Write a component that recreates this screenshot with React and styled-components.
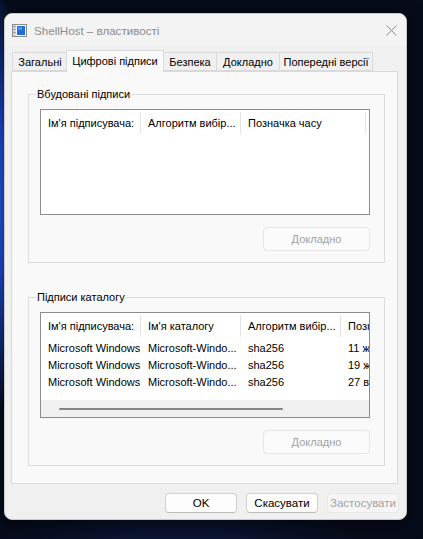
import React from "react";
import styled, { createGlobalStyle } from "styled-components";

const GlobalStyle = createGlobalStyle`
  html, body {
    margin: 0;
    height: 100%;
  }
  body {
    font-family: "Liberation Sans", Arial, sans-serif;
    background:
      radial-gradient(ellipse 40px 220px at -10px 200px, #2f6cf0 0%, #1a45c8 45%, rgba(10, 30, 110, 0) 100%),
      radial-gradient(ellipse 200px 60px at 180px 560px, rgba(30, 60, 150, 0.35) 0%, rgba(10, 20, 60, 0) 100%),
      #060b1a;
  }
  #root {
    padding: 13px 0 0 4px;
  }
`;

const tabs = [
  { label: "Загальні", w: 55 },
  { label: "Цифрові підписи", w: 98, active: true },
  { label: "Безпека", w: 53 },
  { label: "Докладно", w: 63 },
  { label: "Попередні версії", w: 94 },
];

const catalog = [
  ["Microsoft Windows", "Microsoft-Windo...", "sha256", "11 жовтня 2023 р."],
  ["Microsoft Windows", "Microsoft-Windo...", "sha256", "19 жовтня 2023 р."],
  ["Microsoft Windows", "Microsoft-Windo...", "sha256", "27 вересня 2023 р."],
];

function WindowIcon() {
  return (
    <svg width="15" height="13" viewBox="0 0 15 13">
      <rect x="0.5" y="0.5" width="14" height="12" fill="#fff" stroke="#8d8d8d" />
      <rect x="1" y="1" width="3" height="11" fill="#d7d7d7" />
      <rect x="1.5" y="2" width="2" height="1" fill="#8d8d8d" />
      <rect x="1.5" y="5" width="2" height="1" fill="#8d8d8d" />
      <rect x="1.5" y="8" width="2" height="1" fill="#8d8d8d" />
      <rect x="5" y="2" width="8" height="9" fill="#1f6fd6" />
      <rect x="6" y="3" width="4" height="3" fill="#4e9bf0" />
    </svg>
  );
}

function CloseIcon() {
  return (
    <svg width="11" height="11" viewBox="0 0 11 11">
      <path d="M0.5 0.5 L10.5 10.5 M10.5 0.5 L0.5 10.5" stroke="#8a8a8a" strokeWidth="1" />
    </svg>
  );
}

export default function App() {
  return (
    <>
      <GlobalStyle />
      <Window>
        <TitleBar>
          <TitleLeft>
            <WindowIcon />
            <Title>ShellHost – властивості</Title>
          </TitleLeft>
          <CloseBtn>
            <CloseIcon />
          </CloseBtn>
        </TitleBar>

        <Body>
          <TabStrip>
            {tabs.map((t) => (
              <Tab key={t.label} $w={t.w} $active={t.active}>
                {t.label}
              </Tab>
            ))}
          </TabStrip>

          <Panel>
            <Group>
              <Legend>Вбудовані підписи</Legend>
              <List>
                <HeaderRow>
                  <HeadCell $w={100}>Ім'я підписувача:</HeadCell>
                  <HeadCell $w={100}>Алгоритм вибір...</HeadCell>
                  <HeadCell $w={125}>Позначка часу</HeadCell>
                </HeaderRow>
              </List>
              <ButtonRow>
                <DetailsButton disabled>Докладно</DetailsButton>
              </ButtonRow>
            </Group>

            <Group>
              <Legend>Підписи каталогу</Legend>
              <List>
                <HeaderRow>
                  <HeadCell $w={100}>Ім'я підписувача:</HeadCell>
                  <HeadCell $w={100}>Ім'я каталогу</HeadCell>
                  <HeadCell $w={100}>Алгоритм вибір...</HeadCell>
                  <HeadCell $w={110}>Позначка часу</HeadCell>
                </HeaderRow>
                <Rows>
                  {catalog.map((r, i) => (
                    <Row key={i}>
                      <Cell $w={100}>{r[0]}</Cell>
                      <Cell $w={100}>{r[1]}</Cell>
                      <Cell $w={100}>{r[2]}</Cell>
                      <Cell $w={110}>{r[3]}</Cell>
                    </Row>
                  ))}
                </Rows>
                <ScrollTrack>
                  <ScrollThumb />
                </ScrollTrack>
              </List>
              <ButtonRow>
                <DetailsButton disabled>Докладно</DetailsButton>
              </ButtonRow>
            </Group>
          </Panel>

          <Footer>
            <DialogButton>OK</DialogButton>
            <DialogButton>Скасувати</DialogButton>
            <DialogButton disabled>Застосувати</DialogButton>
          </Footer>
        </Body>
      </Window>
    </>
  );
}

const Window = styled.div`
  width: 403px;
  height: 507px;
  box-sizing: border-box;
  background: #f0f0f0;
  border: 1px solid #c9c9c9;
  border-radius: 8px;
  box-shadow: 0 4px 18px rgba(0, 0, 0, 0.5);
  display: flex;
  flex-direction: column;
  overflow: hidden;
`;

const TitleBar = styled.div`
  height: 29px;
  flex: none;
  display: flex;
  align-items: center;
  justify-content: space-between;
  padding: 2px 9px 0 7px;
  background: #f3f3f3;
`;

const TitleLeft = styled.div`
  display: flex;
  align-items: center;
  gap: 7px;
`;

const Title = styled.div`
  font-size: 11.6px;
  color: #8b8b8b;
`;

const CloseBtn = styled.div`
  width: 11px;
  height: 11px;
  display: flex;
`;

const Body = styled.div`
  flex: 1;
  display: flex;
  flex-direction: column;
  padding: 5px 8px 0 6px;
`;

const TabStrip = styled.div`
  height: 21px;
  display: flex;
  align-items: flex-end;
  position: relative;
  z-index: 1;
  margin-left: 1px;
`;

const Tab = styled.div`
  width: ${(p) => p.$w}px;
  height: ${(p) => (p.$active ? 22 : 19)}px;
  box-sizing: border-box;
  margin-bottom: ${(p) => (p.$active ? -1 : 0)}px;
  margin-left: ${(p) => (p.$active ? -1 : 0)}px;
  margin-right: ${(p) => (p.$active ? -1 : 0)}px;
  display: flex;
  align-items: center;
  justify-content: center;
  padding-bottom: ${(p) => (p.$active ? 2 : 0)}px;
  font-size: 11px;
  color: #000;
  background: ${(p) => (p.$active ? "#f9f9f9" : "#f0f0f0")};
  border: 1px solid #d9d9d9;
  border-bottom: ${(p) => (p.$active ? "none" : "1px solid #d9d9d9")};
  border-right: ${(p) => (p.$active ? "1px solid #d9d9d9" : "none")};
  white-space: nowrap;
  &:last-child {
    border-right: 1px solid #d9d9d9;
  }
`;

const Panel = styled.div`
  height: 413px;
  box-sizing: border-box;
  flex: none;
  background: #f9f9f9;
  border: 1px solid #d9d9d9;
  display: flex;
  flex-direction: column;
  gap: 28px;
  padding: 16px 12px 0 16px;
`;

const Group = styled.fieldset`
  margin: 0;
  padding: 8px 14px 11px 11px;
  border: 1px solid #dcdcdc;
  display: flex;
  flex-direction: column;
  gap: 12px;
  min-width: 0;
`;

const Legend = styled.legend`
  font-size: 11px;
  line-height: 13px;
  padding: 0 1px;
  margin-left: -4px;
  color: #000;
`;

const List = styled.div`
  width: 330px;
  height: 106px;
  box-sizing: border-box;
  border: 1px solid #8c8c8c;
  background: #fff;
  display: flex;
  flex-direction: column;
  overflow: hidden;
`;

const HeaderRow = styled.div`
  height: 26px;
  flex: none;
  display: flex;
  align-items: center;
`;

const HeadCell = styled.div`
  width: ${(p) => p.$w}px;
  flex: none;
  height: 22px;
  box-sizing: border-box;
  display: flex;
  align-items: center;
  padding-left: 7px;
  font-size: 11px;
  color: #000;
  border-right: 1px solid #e3e3e3;
  white-space: nowrap;
  overflow: hidden;
`;

const Rows = styled.div`
  flex: 1;
  display: flex;
  flex-direction: column;
`;

const Row = styled.div`
  height: 17px;
  display: flex;
  align-items: center;
`;

const Cell = styled.div`
  width: ${(p) => p.$w}px;
  flex: none;
  box-sizing: border-box;
  padding-left: 7px;
  font-size: 11px;
  color: #000;
  white-space: nowrap;
  overflow: hidden;
`;

const ScrollTrack = styled.div`
  height: 17px;
  flex: none;
  background: #f0f0f0;
  display: flex;
  align-items: center;
  padding-left: 18px;
`;

const ScrollThumb = styled.div`
  width: 224px;
  height: 2px;
  border-radius: 1px;
  background: #858585;
`;

const ButtonRow = styled.div`
  width: 330px;
  display: flex;
  justify-content: flex-end;
`;

const DetailsButton = styled.button`
  width: 107px;
  height: 24px;
  font-family: "Liberation Sans", Arial, sans-serif;
  font-size: 11px;
  color: #a2a2a2;
  background: #fbfbfb;
  border: 1px solid #e5e5e5;
  border-radius: 4px;
  padding: 0;
`;

const Footer = styled.div`
  display: flex;
  justify-content: flex-end;
  gap: 9px;
  padding-top: 9px;
  margin-right: -1px;
`;

const DialogButton = styled.button`
  width: 72px;
  height: 20px;
  padding: 0;
  font-family: "Liberation Sans", Arial, sans-serif;
  font-size: 11.5px;
  color: ${(p) => (p.disabled ? "#a2a2a2" : "#000")};
  background: ${(p) => (p.disabled ? "#f5f5f5" : "#fdfdfd")};
  border: 1px solid ${(p) => (p.disabled ? "#e8e8e8" : "#d0d0d0")};
  border-bottom-color: ${(p) => (p.disabled ? "#e8e8e8" : "#bcbcbc")};
  border-radius: 4px;
`;
